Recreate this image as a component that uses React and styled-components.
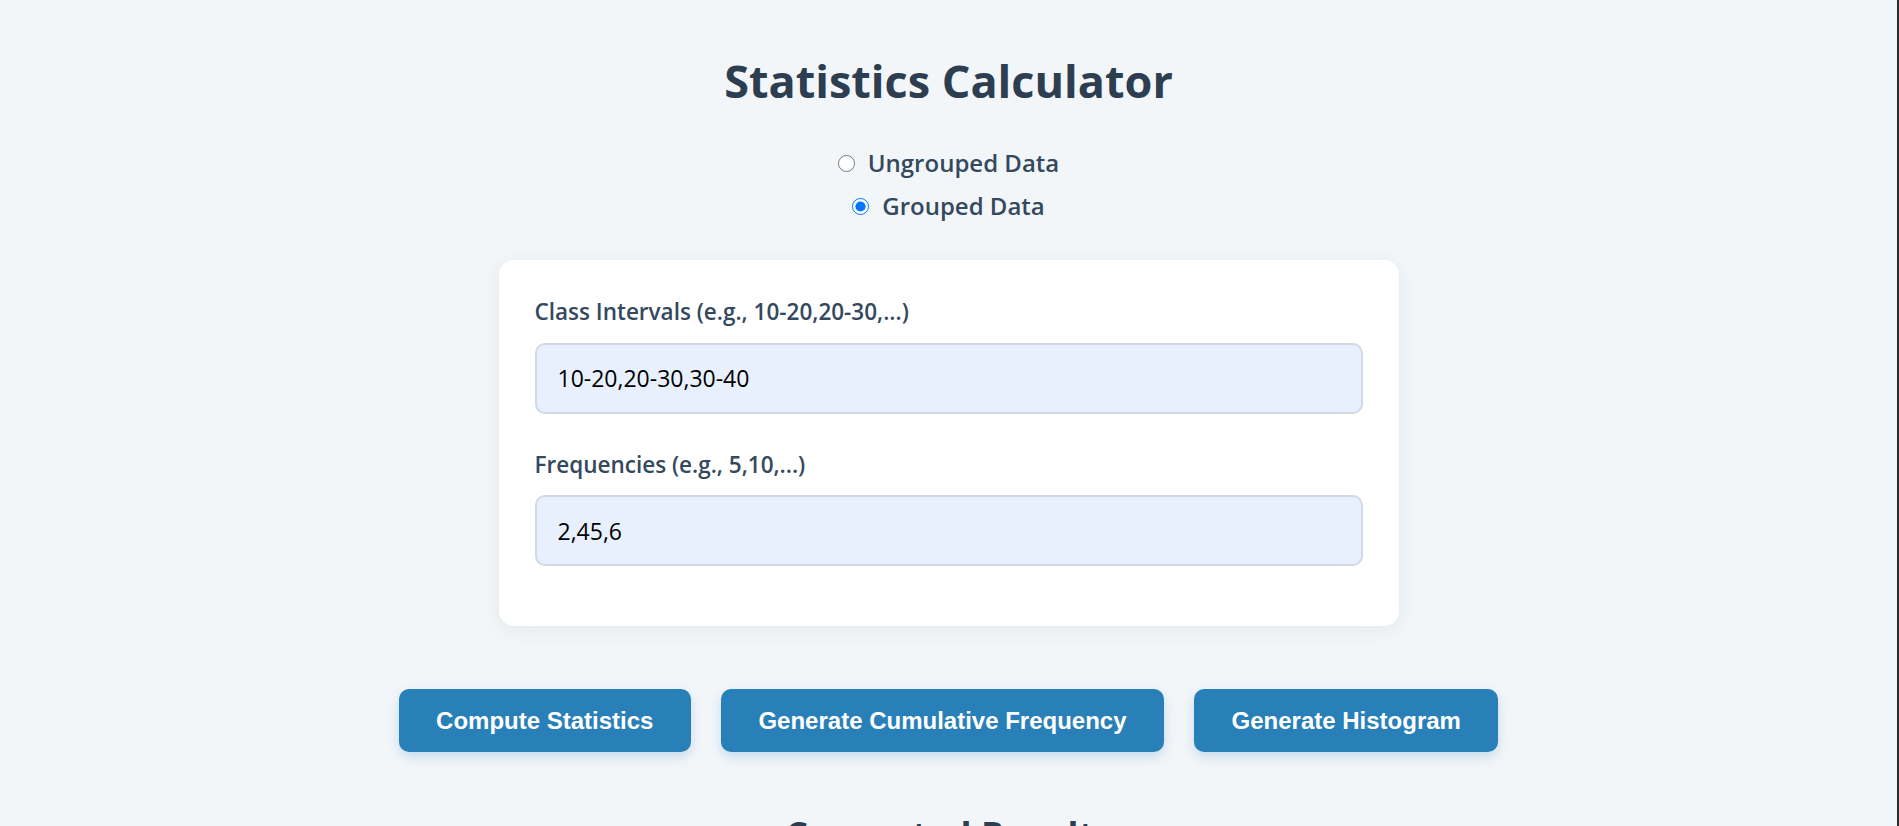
import React, { useState } from 'react';
import styled, { createGlobalStyle } from 'styled-components';

const GlobalStyle = createGlobalStyle`
  body {
    margin: 0;
    background: #f3f6f9;
    font-family: "Open Sans", "Noto Sans", sans-serif;
    color: #2c3e50;
  }
`;

const Page = styled.div`
  min-height: 100vh;
  box-sizing: border-box;
  border-right: 2px solid #2b2b2b;
  padding-top: 53px;
  overflow: hidden;
`;

const Title = styled.h1`
  margin: 0;
  text-align: center;
  font-size: 45px;
  line-height: 55px;
  font-weight: 700;
  color: #2c3e50;
`;

const RadioGroup = styled.div`
  display: flex;
  flex-direction: column;
  align-items: center;
  gap: 9px;
  margin-top: 38px;
`;

const RadioLabel = styled.label`
  display: flex;
  align-items: center;
  font-size: 24px;
  line-height: 34px;
  font-weight: 600;
  color: #34495e;
  cursor: pointer;

  input {
    width: 17px;
    height: 17px;
    margin: 0 13px 0 0;
  }
`;

const Card = styled.div`
  width: 900px;
  box-sizing: border-box;
  margin: 37px auto 0;
  padding: 36px 36px 60px;
  background: #fff;
  border-radius: 15px;
  box-shadow: 0 4px 20px rgba(0, 0, 0, 0.06);
  display: flex;
  flex-direction: column;
  gap: 35px;
`;

const Field = styled.div`
  display: flex;
  flex-direction: column;
`;

const FieldLabel = styled.label`
  font-size: 22.5px;
  line-height: 1.4;
  font-weight: 600;
  color: #34495e;
  margin-bottom: 15px;
`;

const Input = styled.input`
  box-sizing: border-box;
  height: 71px;
  padding: 0 21px;
  font-family: inherit;
  font-size: 23px;
  color: #000;
  background: #e8f0fe;
  border: 2px solid #d1d9e4;
  border-radius: 10px;
  outline: none;
`;

const ButtonRow = styled.div`
  display: flex;
  justify-content: center;
  gap: 30px;
  margin-top: 63px;
`;

const Button = styled.button`
  height: 63px;
  padding: 0 37.5px;
  border: none;
  border-radius: 10px;
  background: #2980b9;
  color: #fff;
  font-family: "Liberation Sans", Arial, sans-serif;
  font-weight: 700;
  font-size: 24px;
  box-shadow: 0 5px 12px rgba(41, 128, 185, 0.22);
  cursor: pointer;
`;

const ResultsTitle = styled.h2`
  margin: 61px 0 0;
  text-align: center;
  font-size: 36px;
  line-height: 1.2;
  font-weight: 700;
  color: #2c3e50;
`;

export default function App() {
  const [mode, setMode] = useState('grouped');
  const [intervals, setIntervals] = useState('10-20,20-30,30-40');
  const [freqs, setFreqs] = useState('2,45,6');

  return (
    <Page>
      <GlobalStyle />
      <Title>Statistics Calculator</Title>
      <RadioGroup>
        <RadioLabel>
          <input
            type="radio"
            name="mode"
            checked={mode === 'ungrouped'}
            onChange={() => setMode('ungrouped')}
          />
          Ungrouped Data
        </RadioLabel>
        <RadioLabel>
          <input
            type="radio"
            name="mode"
            checked={mode === 'grouped'}
            onChange={() => setMode('grouped')}
          />
          Grouped Data
        </RadioLabel>
      </RadioGroup>
      <Card>
        <Field>
          <FieldLabel>Class Intervals (e.g., 10-20,20-30,...)</FieldLabel>
          <Input value={intervals} onChange={e => setIntervals(e.target.value)} />
        </Field>
        <Field>
          <FieldLabel>Frequencies (e.g., 5,10,...)</FieldLabel>
          <Input value={freqs} onChange={e => setFreqs(e.target.value)} />
        </Field>
      </Card>
      <ButtonRow>
        <Button>Compute Statistics</Button>
        <Button>Generate Cumulative Frequency</Button>
        <Button>Generate Histogram</Button>
      </ButtonRow>
      <ResultsTitle>Computed Results</ResultsTitle>
    </Page>
  );
}
